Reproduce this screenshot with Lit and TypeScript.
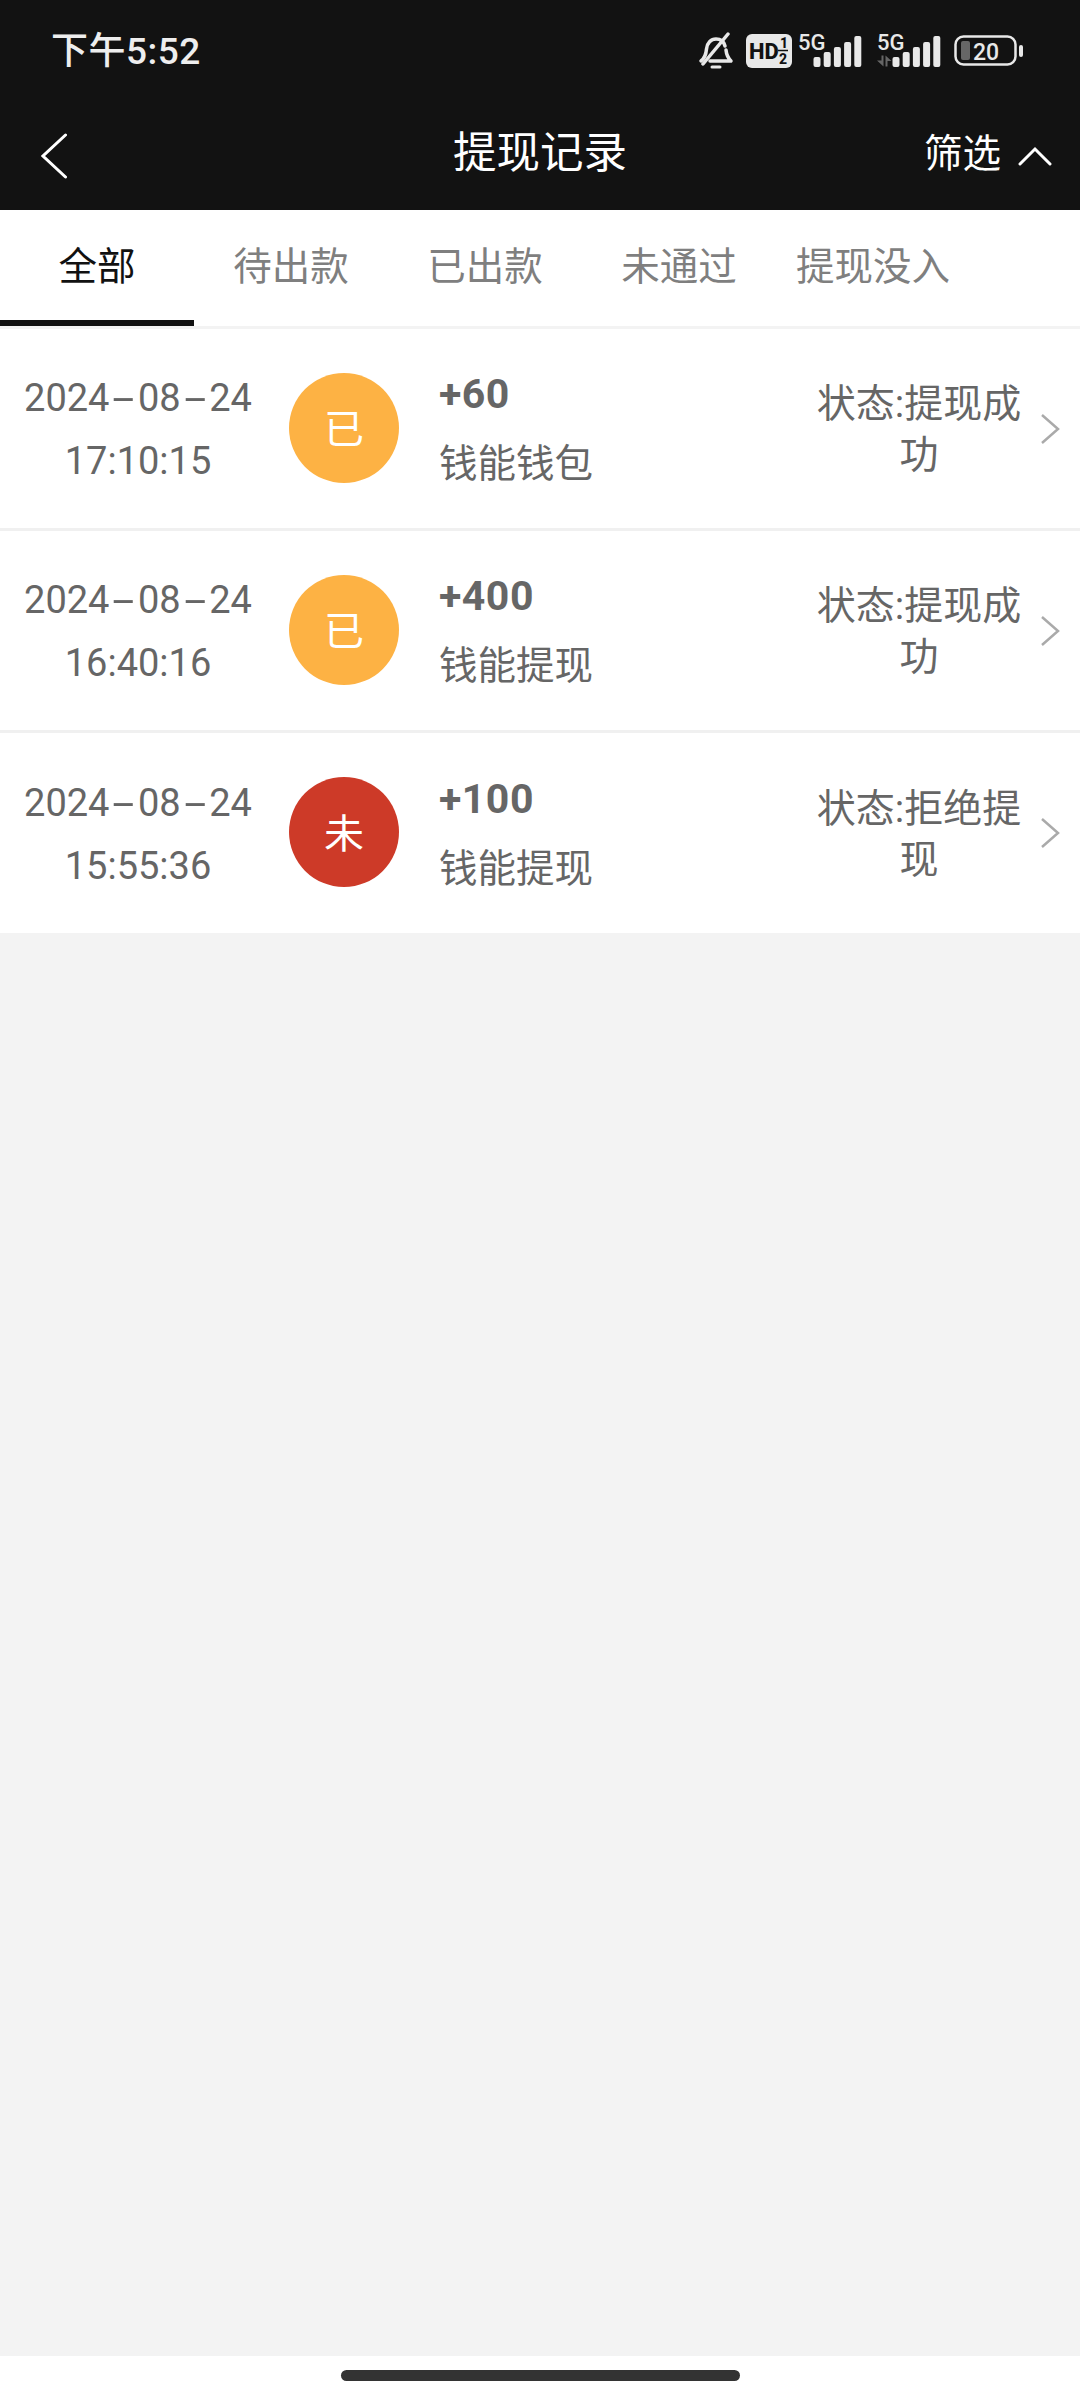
import { LitElement, html, css, svg } from "lit";
import { customElement } from "lit/decorators.js";

const rows = [
  { d: "2024-08-24", t: "17:10:15", c: "已", color: "#fdb244", amt: "+60", name: "钱能钱包", s: "状态:提现成功" },
  { d: "2024-08-24", t: "16:40:16", c: "已", color: "#fdb244", amt: "+400", name: "钱能提现", s: "状态:提现成功" },
  { d: "2024-08-24", t: "15:55:36", c: "未", color: "#cd3a28", amt: "+100", name: "钱能提现", s: "状态:拒绝提现" },
];
const tabs = ["全部", "待出款", "已出款", "未通过", "提现没入"];

const signal = (arrows: boolean) => svg`
  <svg class="sig" width="68" height="42" viewBox="0 -6 68 42">
    <text x="0" y="18" class="g5">5G</text>
    ${arrows ? svg`<path d="M0 28.500h4.500v-5h2v11zM8.500 23.500v11h2v-5.500h4z" fill="#666"/>` : ""}
    <rect x="15.500" y="25" width="7" height="10" rx="2" fill="#e8e8e8"/>
    <rect x="25.700" y="20" width="7" height="15" rx="2" fill="#e8e8e8"/>
    <rect x="35.900" y="15" width="7" height="20" rx="2" fill="#e8e8e8"/>
    <rect x="46.100" y="10" width="7" height="25" rx="2" fill="#e8e8e8"/>
    <rect x="56.300" y="4" width="7" height="31" rx="2" fill="#e8e8e8"/>
  </svg>`;

@customElement("app-root")
export class AppRoot extends LitElement {
  static styles = css`
    :host { display: block; width: 1080px; height: 2400px; font-family: Roboto, "Noto Sans CJK SC", sans-serif; background: #f3f3f3; }
    .page { display: flex; flex-direction: column; height: 2400px; }
    .head { height: 210px; background: #121212; color: #fff; display: flex; flex-direction: column; flex: none; }
    .status { height: 102px; display: flex; align-items: center; padding: 0 56px 0 51px; justify-content: space-between; }
    .clock { font-size: 37px; letter-spacing: 0.5px; font-weight: 500; color: #eee; line-height: 105px; }
    .icons { display: flex; align-items: center; gap: 12px; }
    .sigs { display: flex; gap: 11px; margin: 0 -3px 0 -6px; }
    .sig { display: block; overflow: visible; margin-top: -8px; }
    .g5 { font: 500 22px Roboto, sans-serif; fill: #e8e8e8; }
    .hd { font: 800 22px Roboto, sans-serif; fill: #121212; }
    .hds { font: 800 14px Roboto, sans-serif; fill: #121212; }
    .bat { font: 500 23px Roboto, sans-serif; fill: #e8e8e8; }
    .nav { flex: 1; display: flex; align-items: center; justify-content: space-between; padding: 0 28px 0 41px; position: relative; }
    .title { position: absolute; left: 0; right: 0; text-align: center; font-size: 43.5px; line-height: 1; top: 30px; color: #fff; }
    .filter { display: flex; align-items: center; gap: 17px; font-size: 38.500px; line-height: 1; }
    .filter-t { margin-top: -3px; }
    .tabs { display: flex; background: #fff; height: 116px; border-bottom: 3px solid #f3f3f3; flex: none; }
    .tab { width: 194px; height: 116px; box-sizing: border-box; text-align: center; font-size: 38.5px; line-height: 114px; color: #7f7f7f; }
    .tab.on { color: #111; border-bottom: 6px solid #111; }
    .list { background: #fff; flex: none; }
    .row { height: 202px; box-sizing: border-box; border-bottom: 3px solid #f0f0f0; display: flex; align-items: center; color: #666; padding-bottom: 2px; }
    .row:last-child { border-bottom: 0; height: 200px; }
    .date { width: 276px; text-align: center; font-size: 38px; line-height: 63px; padding-top: 5px; }
    .sep { display: inline-block; transform: scaleX(2.1); margin: 0 9px; }
    .dot { width: 110px; height: 110px; margin-left: 13px; padding-bottom: 3px; box-sizing: border-box; border-radius: 50%; color: #fff; font-size: 40px; display: flex; align-items: center; justify-content: center; flex: none; }
    .mid { width: 378px; margin-left: 40px; padding-top: 7px; flex: none; }
    .amt { font-size: 41px; letter-spacing: 0.5px; font-weight: 700; line-height: 58px; }
    .name { font-size: 38.5px; line-height: 66px; margin-top: 8px; }
    .state { width: 208px; margin-left: -2px; padding-top: 5px; text-align: center; font-size: 39px; line-height: 51px; flex: none; }
    .chev { margin: 2px 0 0 17px; flex: none; }
    .fill { flex: 1; }
    .foot { height: 44px; background: #fff; display: flex; justify-content: center; padding-top: 14px; box-sizing: border-box; flex: none; }
    .bar { width: 399px; height: 11px; border-radius: 6px; background: #333; }
  `;

  render() {
    return html`<div class="page">
      <div class="head">
        <div class="status">
          <span class="clock">下午5:52</span>
          <div class="icons">
            <svg width="36" height="38" viewBox="0 0 36 38" fill="none" stroke="#e8e8e8" stroke-width="3.500" stroke-linecap="round" stroke-linejoin="round">
              <path d="M3 29c4-3 5-6 5.500-12 .5-6 4.500-10 9.500-10s8 3 9 7M28 18c.5 5 2 8 5 11H12"/>
              <path d="M30 2 5 32"/>
              <path d="M14 35h8" stroke-width="3"/>
            </svg>
            <svg width="46" height="34" viewBox="0 0 46 34">
              <rect width="46" height="34" rx="6" fill="#e8e8e8"/>
              <text x="3" y="25" class="hd">HD</text>
              <text x="34" y="14" class="hds">1</text>
              <path d="M32 16.500h10" stroke="#121212" stroke-width="1.500"/>
              <text x="33" y="30" class="hds">2</text>
            </svg>
            <div class="sigs">${signal(false)}${signal(true)}</div>
            <svg width="70" height="32" viewBox="0 0 70 32">
              <rect x="1.500" y="1.500" width="60" height="28" rx="8" fill="none" stroke="#e8e8e8" stroke-width="2.500"/>
              <rect x="7" y="6" width="9" height="19" rx="2" fill="#666"/>
              <text x="19" y="25" class="bat">20</text>
              <rect x="65" y="10" width="4" height="12" rx="2" fill="#e8e8e8"/>
            </svg>
          </div>
        </div>
        <div class="nav">
          <svg width="26" height="46" viewBox="0 0 26 46" fill="none" stroke="#fff" stroke-width="3" stroke-linecap="round"><path d="M24.500 2 2 23l22.500 21"/></svg>
          <div class="title">提现记录</div>
          <div class="filter"><span class="filter-t">筛选</span>
            <svg width="34" height="20" viewBox="0 0 34 20" fill="none" stroke="#fff" stroke-width="3" stroke-linecap="round"><path d="M2 18 17 3l15 15"/></svg>
          </div>
        </div>
      </div>
      <div class="tabs">${tabs.map((t, i) => html`<div class="tab ${i === 0 ? "on" : ""}">${t}</div>`)}</div>
      <div class="list">
        ${rows.map(r => {
          const [y, m, d] = r.d.split("-");
          return html`<div class="row">
          <div class="date">${y}<span class="sep">-</span>${m}<span class="sep">-</span>${d}<br />${r.t}</div>
          <div class="dot" style="background:${r.color}">${r.c}</div>
          <div class="mid"><div class="amt">${r.amt}</div><div class="name">${r.name}</div></div>
          <div class="state">${r.s}</div>
          <svg class="chev" width="20" height="32" viewBox="0 0 20 32" fill="none" stroke="#aaa" stroke-width="2.500"><path d="M2 2l16 14L2 30"/></svg>
        </div>`;
        })}
      </div>
      <div class="fill"></div>
      <div class="foot"><div class="bar"></div></div>
    </div>`;
  }
}
